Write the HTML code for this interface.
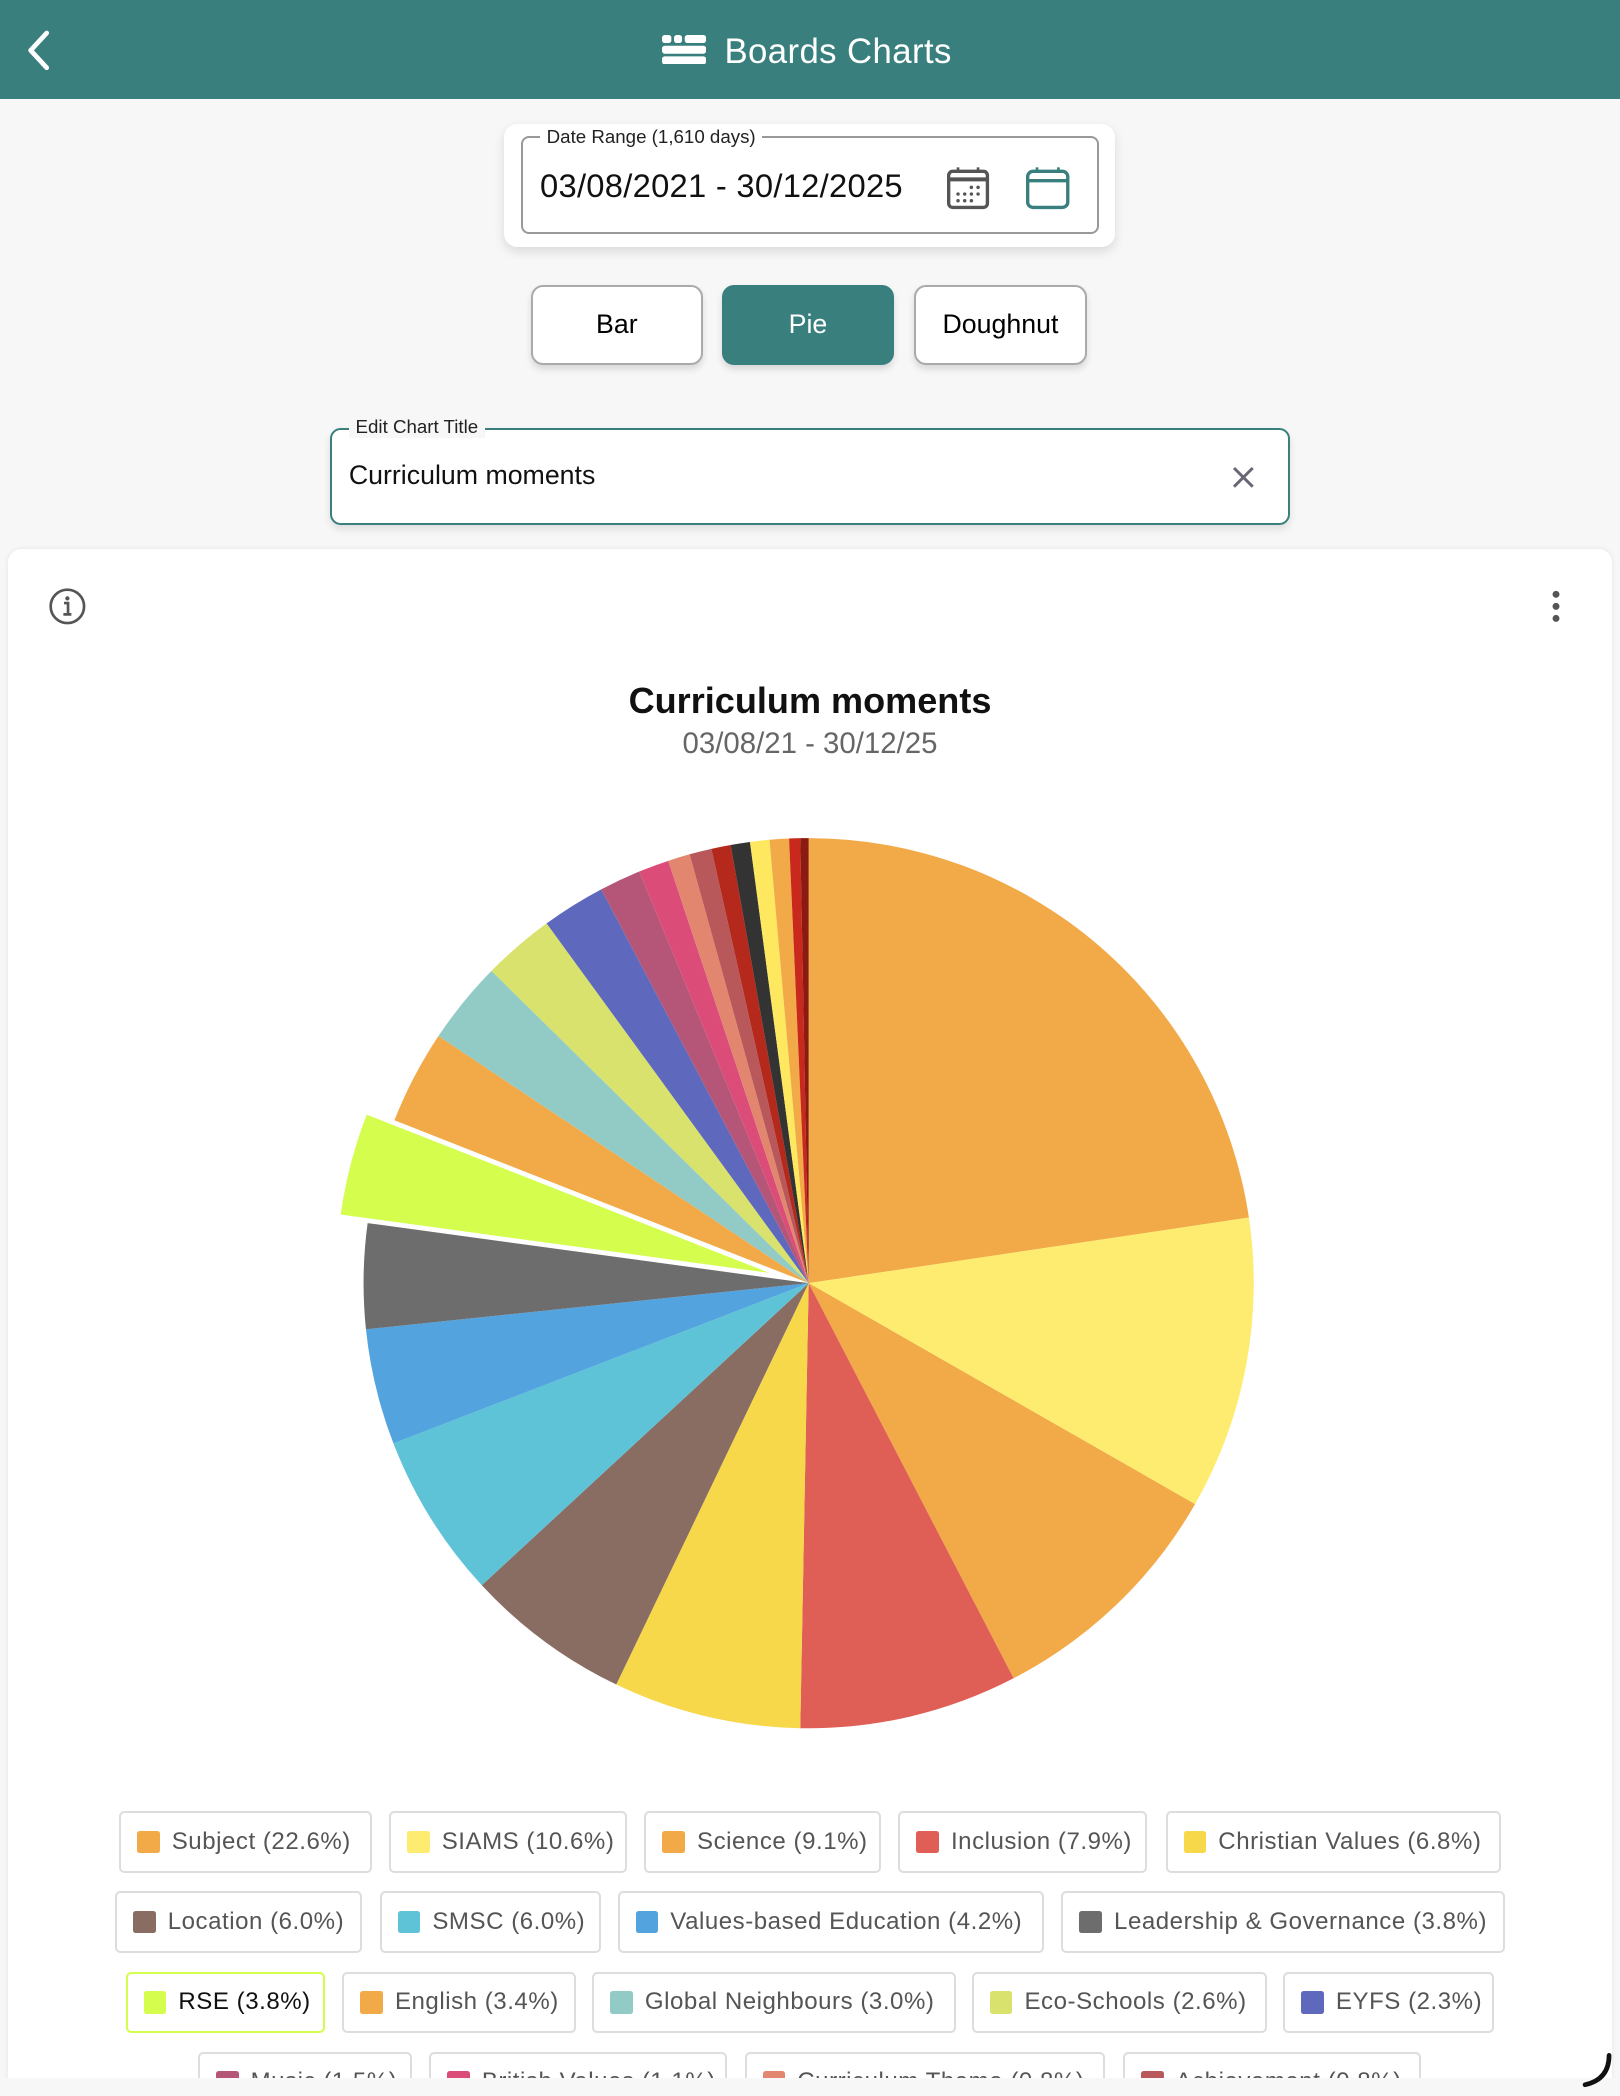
<!DOCTYPE html>
<html><head><meta charset="utf-8"><style>
html,body{margin:0;padding:0;background:#f7f7f7;overflow:hidden}
#w{position:relative;width:1212px;height:1568px;zoom:1.336634;font-family:"Liberation Sans",sans-serif;background:#f7f7f7;overflow:hidden}
.hdr{position:absolute;left:0;top:0;width:1212px;height:74px;background:#387f7d;color:#fff}
.abs{position:absolute}
.btn{position:absolute;top:213px;width:129px;height:60px;border:1.5px solid #aaa;border-radius:9px;background:#fff;box-sizing:border-box;font-size:20px;display:flex;align-items:center;justify-content:center;color:#000;box-shadow:0 3px 5px rgba(0,0,0,.12)}
.chip{position:absolute;height:46px;border:1.5px solid #ddd;border-radius:4px;box-sizing:border-box;display:flex;align-items:center;padding-left:12px;font-size:18px;letter-spacing:0.4px;color:#555;white-space:nowrap;overflow:hidden;background:#fff}
.chip i{display:inline-block;width:17px;height:17px;border-radius:2px;margin-right:9px;flex:none}
</style></head><body><div id="w">
<div class="hdr">
<svg class="abs" style="left:18px;top:22px" width="22" height="32" viewBox="0 0 22 32"><path d="M17 3 L5 16 L17 29" stroke="#fff" stroke-width="3.5" fill="none" stroke-linecap="round" stroke-linejoin="round"/></svg>
<svg class="abs" style="left:495px;top:26px" width="33" height="22" viewBox="0 0 33 22"><rect x="0" y="0" width="7" height="6" rx="2" fill="#fff"/><rect x="9" y="0" width="6" height="6" rx="2" fill="#fff"/><rect x="17" y="0" width="16" height="6" rx="2" fill="#fff"/><rect x="0" y="8" width="33" height="6" rx="2" fill="#fff"/><rect x="0" y="16" width="33" height="6" rx="2" fill="#fff"/></svg>
<div class="abs" style="left:542px;top:25px;font-size:26px;letter-spacing:0.3px">Boards Charts</div>
</div>
<div class="abs" style="left:377px;top:93px;width:457px;height:92px;background:#fff;border-radius:10px;box-shadow:0 3px 8px rgba(0,0,0,.12)"></div>
<div class="abs" style="left:390px;top:102px;width:432px;height:73px;border:1.5px solid #999;border-radius:6px;box-sizing:border-box"></div>
<div class="abs" style="left:404px;top:94px;background:#fff;padding:0 5px;font-size:14px;color:#222">Date Range (1,610 days)</div>
<div class="abs" style="left:404px;top:125px;font-size:24.5px;letter-spacing:0.2px;color:#111">03/08/2021 - 30/12/2025</div>
<svg class="abs" style="left:708px;top:124px" width="33" height="33" viewBox="0 0 33 33"><rect x="2" y="4" width="29" height="27" rx="3" stroke="#555" stroke-width="2.5" fill="none"/><line x1="2" y1="10" x2="31" y2="10" stroke="#555" stroke-width="3"/><line x1="9" y1="1" x2="9" y2="5" stroke="#555" stroke-width="2"/><line x1="24" y1="1" x2="24" y2="5" stroke="#555" stroke-width="2"/><g fill="#555"><circle cx="19" cy="16" r="1.3"/><circle cx="24" cy="16" r="1.3"/><circle cx="9" cy="21" r="1.3"/><circle cx="14" cy="21" r="1.3"/><circle cx="19" cy="21" r="1.3"/><circle cx="24" cy="21" r="1.3"/><circle cx="9" cy="26" r="1.3"/><circle cx="14" cy="26" r="1.3"/><circle cx="19" cy="26" r="1.3"/></g></svg>
<svg class="abs" style="left:767px;top:124px" width="34" height="33" viewBox="0 0 34 33"><rect x="2" y="4" width="30" height="27" rx="4" stroke="#387f7d" stroke-width="2.5" fill="none"/><line x1="2" y1="11" x2="32" y2="11" stroke="#387f7d" stroke-width="2.5"/><line x1="9" y1="1" x2="9" y2="5" stroke="#387f7d" stroke-width="2"/><line x1="25" y1="1" x2="25" y2="5" stroke="#387f7d" stroke-width="2"/></svg>
<div class="btn" style="left:397px">Bar</div>
<div class="btn" style="left:540px;background:#387f7d;border-color:#387f7d;color:#fff">Pie</div>
<div class="btn" style="left:684px">Doughnut</div>
<div class="abs" style="left:247px;top:320px;width:718px;height:73px;border:1.5px solid #387f7d;border-radius:8px;box-sizing:border-box;background:#fff;box-shadow:0 3px 6px rgba(0,0,0,.1)"></div>
<div class="abs" style="left:261px;top:311px;background:#f7f7f7;padding:0 5px;font-size:14px;color:#222">Edit Chart Title</div>
<div class="abs" style="left:261px;top:344px;font-size:20px;color:#111">Curriculum moments</div>
<svg class="abs" style="left:920px;top:347px" width="20" height="20" viewBox="0 0 20 20"><path d="M3 3L17 17M17 3L3 17" stroke="#667" stroke-width="2.2"/></svg>
<div class="abs" style="left:6px;top:411px;width:1200px;height:1200px;background:#fff;border-radius:10px;box-shadow:0 0 4px rgba(0,0,0,.08)"></div>
<svg class="abs" style="left:36px;top:439px" width="29" height="29" viewBox="0 0 29 29"><circle cx="14.5" cy="14.5" r="12.5" stroke="#555" stroke-width="2" fill="none"/><circle cx="14.5" cy="8.5" r="1.6" fill="#555"/><path d="M12 12h3v8M11.5 20.5h6" stroke="#555" stroke-width="2" fill="none"/></svg>
<svg class="abs" style="left:1158px;top:441px" width="12" height="28" viewBox="0 0 12 28"><circle cx="6" cy="4" r="2.6" fill="#555"/><circle cx="6" cy="13" r="2.6" fill="#555"/><circle cx="6" cy="22" r="2.6" fill="#555"/></svg>
<div class="abs" style="left:0;width:1212px;top:509px;text-align:center;font-size:27px;font-weight:bold;color:#111">Curriculum moments</div>
<div class="abs" style="left:0;width:1212px;top:544px;text-align:center;font-size:22px;color:#666">03/08/21 - 30/12/25</div>
<svg id="pie" class="abs" style="left:0;top:0" width="1212" height="1568"></svg>
<div class="chip" style="left:89px;top:1355px;width:189px"><i style="background:#f2a947"></i>Subject (22.6%)</div>
<div class="chip" style="left:291px;top:1355px;width:178px"><i style="background:#fdec6f"></i>SIAMS (10.6%)</div>
<div class="chip" style="left:482px;top:1355px;width:177px"><i style="background:#f2a947"></i>Science (9.1%)</div>
<div class="chip" style="left:672px;top:1355px;width:186px"><i style="background:#df5f57"></i>Inclusion (7.9%)</div>
<div class="chip" style="left:872px;top:1355px;width:251px"><i style="background:#f6d84a"></i>Christian Values (6.8%)</div>
<div class="chip" style="left:86px;top:1415px;width:185px"><i style="background:#8a6d62"></i>Location (6.0%)</div>
<div class="chip" style="left:284px;top:1415px;width:166px"><i style="background:#5fc3d8"></i>SMSC (6.0%)</div>
<div class="chip" style="left:462px;top:1415px;width:319px"><i style="background:#52a3de"></i>Values-based Education (4.2%)</div>
<div class="chip" style="left:794px;top:1415px;width:332px"><i style="background:#6d6d6d"></i>Leadership &amp; Governance (3.8%)</div>
<div class="chip" style="left:94px;top:1475px;width:149px;border-color:#d4fd4e;color:#111"><i style="background:#d4fd4e"></i>RSE (3.8%)</div>
<div class="chip" style="left:256px;top:1475px;width:175px"><i style="background:#f2a947"></i>English (3.4%)</div>
<div class="chip" style="left:443px;top:1475px;width:272px"><i style="background:#92cbc6"></i>Global Neighbours (3.0%)</div>
<div class="chip" style="left:727px;top:1475px;width:221px"><i style="background:#d8e26c"></i>Eco-Schools (2.6%)</div>
<div class="chip" style="left:960px;top:1475px;width:158px"><i style="background:#5e69bd"></i>EYFS (2.3%)</div>
<div class="chip" style="left:148px;top:1535px;width:160px"><i style="background:#b55679"></i>Music (1.5%)</div>
<div class="chip" style="left:321px;top:1535px;width:223px"><i style="background:#dc4c79"></i>British Values (1.1%)</div>
<div class="chip" style="left:557px;top:1535px;width:270px"><i style="background:#e3866f"></i>Curriculum Theme (0.8%)</div>
<div class="chip" style="left:840px;top:1535px;width:223px"><i style="background:#b8585a"></i>Achievement (0.8%)</div>
<div class="abs" style="left:0;top:1555px;width:1212px;height:13px;background:#f7f7f7"></div>
<svg class="abs" style="left:1180px;top:1534px" width="30" height="30" viewBox="0 0 30 30"><path d="M24 4 Q24 22 6 26" stroke="#111" stroke-width="3.5" fill="none" stroke-linecap="round"/></svg>
</div>
<script>
var d=[[22.6,"#f2a947"],[10.6,"#fdec6f"],[9.1,"#f2a947"],[7.9,"#df5f57"],[6.8,"#f6d84a"],[6.0,"#8a6d62"],[6.0,"#5fc3d8"],[4.2,"#52a3de"],[3.8,"#6d6d6d"],[3.8,"#d4fd4e",1],[3.4,"#f2a947"],[3.0,"#92cbc6"],[2.6,"#d8e26c"],[2.3,"#5e69bd"],[1.5,"#b55679"],[1.1,"#dc4c79"],[0.8,"#e3866f"],[0.8,"#b8585a"],[0.7,"#b5281c"],[0.7,"#333333"],[0.7,"#fde85f"],[0.7,"#f2a947"],[0.4,"#c9281c"],[0.3,"#8b1a10"]];
var t=0;d.forEach(function(x){t+=x[0]});
var cx=605,cy=960,r=333,a=0,s="";
d.forEach(function(x){var a2=a+x[0]/t*2*Math.PI,ox=0,oy=0;
if(x[2]){var m=(a+a2)/2;ox=Math.sin(m)*22;oy=-Math.cos(m)*22;}
var X=cx+ox,Y=cy+oy;
var p="M"+X+" "+Y+"L"+(X+r*Math.sin(a))+" "+(Y-r*Math.cos(a))+"A"+r+" "+r+" 0 "+(a2-a>Math.PI?1:0)+" 1 "+(X+r*Math.sin(a2))+" "+(Y-r*Math.cos(a2))+"Z";
s+='<path d="'+p+'" fill="'+x[1]+'"'+(x[2]?' stroke="#fff" stroke-width="2"':'')+'/>';a=a2;});
document.getElementById("pie").innerHTML=s;
</script>
</body></html>
